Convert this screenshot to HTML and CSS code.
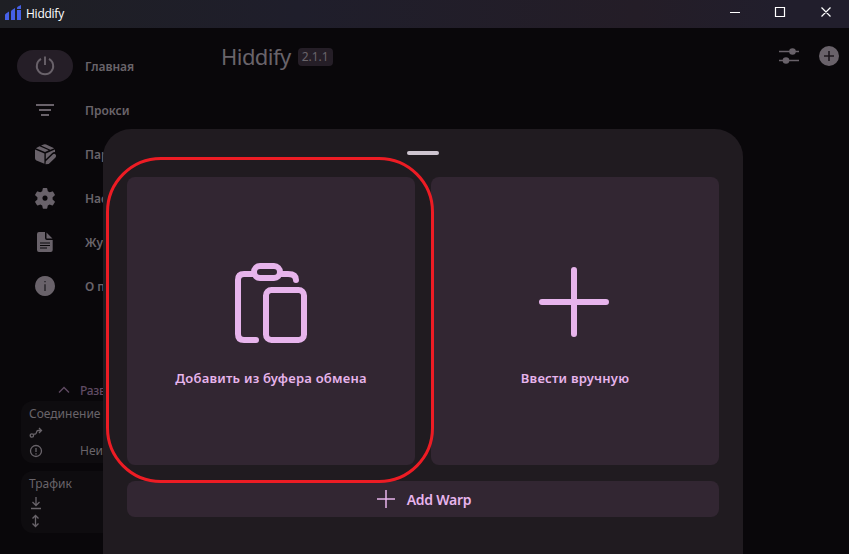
FILE: index.html
```html
<!DOCTYPE html>
<html lang="ru">
<head>
<meta charset="utf-8">
<title>Hiddify</title>
<link rel="stylesheet" href="styles.css">
</head>
<body>
<div class="window">
  <header class="titlebar">
    <svg class="logo" width="17" height="16" viewBox="0 0 17 16"><path d="M0 10q0-1 1-1.500L4 6.500V15H0zM6 6.500q0-1 1-1.500l3-2v12H6zM12 3q0-1 1-1.500L16 0v4h-4zM12 5h4v10h-4z"/></svg>
    <span class="app-name">Hiddify</span>
    <svg class="controls" width="102" height="12" viewBox="0 0 102 12"><path d="M0 6.500h10M45.500 1.500h9v9h-9zM91.500 1.500l9 9M100.500 1.500l-9 9"/></svg>
  </header>
  <div class="shell">
    <aside class="sidebar">
      <nav class="nav">
        <a class="item"><span class="pill active"><svg viewBox="0 0 24 24" width="24" height="24" class="line"><path d="M12 2.500v8.500M8 4.900a8.200 8.200 0 1 0 8 0"/></svg></span><span>Главная</span></a>
        <a class="item"><span class="pill"><svg viewBox="0 0 24 24" width="24" height="24" class="line"><path d="M3 7h18M6 12h12M8 17h8"/></svg></span><span>Прокси</span></a>
        <a class="item"><span class="pill"><svg viewBox="0 0 24 24" width="24" height="24"><path d="M2 7.600l9.400 3.800v10.300L3.400 18.500Q2 17.800 2 16.300zM2.800 6.200l3.700-1.900 9.200 3.900-3.700 1.900zM8 3.500l2.700-1.100q1.200-.4 2.400 0l8.100 3.800-3.800 1.600zM12.800 11.400L22 7.600v2.500q-2 0-3.300 1.300l-5.900 5.800zM12.800 19.300l6.900-6.800q1.500-1.300 2.900 0 1.200 1.500-.1 2.900l-6.800 6.500-3.200.4z"/></svg></span><span>Параметры</span></a>
        <a class="item"><span class="pill"><svg viewBox="0 0 24 24" width="24" height="24"><path fill-rule="evenodd" d="M10.400 2h3.200q.6 0 .7.700l.5 2.500 1.900 1.100 2.500-.9q.6-.2.900.3l1.700 2.900q.3.600-.2 1l-2 1.700v2.200l2 1.700q.5.400.2 1l-1.700 2.900q-.3.500-.9.300l-2.500-.9-1.900 1.100-.5 2.500q-.1.700-.7.700h-3.200q-.6 0-.7-.7l-.5-2.500-1.900-1.100-2.500.9q-.6.200-.9-.3l-1.700-2.900q-.3-.6.200-1l2-1.700v-2.200l-2-1.700q-.5-.4-.2-1l1.700-2.900q.3-.5.900-.3l2.500.9 1.900-1.100.5-2.500q.1-.7.700-.7zM12 9.500a2.600 2.600 0 1 0 .01 0z"/></svg></span><span>Настройки</span></a>
        <a class="item"><span class="pill"><svg viewBox="0 0 24 24" width="24" height="24"><path fill-rule="evenodd" d="M6 2h6v6q0 2 2 2h5.700v10q0 2-2 2H6q-2 0-2-2V4q0-2 2-2zM7 12.500v1h10v-1zM7 15v1h10v-1zM7 17.500v1h7v-1zM13.500 2.500l6 6H14q-.5 0-.5-.5z"/></svg></span><span>Журнал</span></a>
        <a class="item"><span class="pill"><svg viewBox="0 0 24 24" width="24" height="24"><path fill-rule="evenodd" d="M12 2a10 10 0 1 0 .01 0zM11.500 7h1v1.300h-1zM11.500 10.300h1V17h-1z"/></svg></span><span>О программе</span></a>
      </nav>
      <div class="expand"><svg width="12" height="8" viewBox="0 0 12 8"><path d="M1 6.500l5-5 5 5"/></svg><span>Развернуть</span></div>
      <section class="stat">
        <h2>Соединение</h2>
        <div class="stat-row"><svg width="14" height="14" viewBox="0 0 14 14"><path d="M4.400 8.500C5.500 7.300 6 9 7 7.500S7.300 4.500 9 4.500h3M10 2l2.500 2.500L10 7"/><circle cx="2.900" cy="9.500" r="1.700"/></svg></div>
        <div class="stat-row"><svg width="14" height="14" viewBox="0 0 14 14"><circle cx="7" cy="7" r="5.500"/><path d="M7 4v4M7 9.300v1.200"/></svg><span>Неизвестно</span></div>
      </section>
      <section class="stat">
        <h2>Трафик</h2>
        <div class="stat-row"><svg width="14" height="14" viewBox="0 0 14 14"><path d="M7 1v8.500M3.500 6L7 9.500 10.500 6M2 12.500h10"/></svg></div>
        <div class="stat-row"><svg width="14" height="14" viewBox="0 0 14 14"><path d="M6.500 2v10M3.500 4.500l3-3 3 3M3.500 9.500l3 3 3-3"/></svg></div>
      </section>
    </aside>
    <main class="main">
      <h1>Hiddify</h1><span class="version">2.1.1</span>
      <svg class="tune" width="20" height="16" viewBox="0 0 20 16"><path d="M0 3.500h20M0 12.500h20"/><circle cx="13.500" cy="3.500" r="3.300"/><circle cx="7" cy="12.500" r="3.300"/></svg>
      <svg class="add" width="20" height="20" viewBox="0 0 20 20"><circle cx="10" cy="10" r="10"/><path d="M10 5v10M5 10h10"/></svg>
    </main>
  </div>
  <div class="sheet">
    <div class="handle"></div>
    <div class="cards">
      <button class="card"><svg width="80" height="80" viewBox="0 0 80 80"><rect x="23" y="3" width="26" height="12" rx="6"/><path d="M22 11h-9q-6 0-6 6v54q0 6 6 6h12M50 11h7q8 0 8 6"/><rect x="35" y="27" width="38" height="50" rx="5.500"/></svg><span class="paste-label">Добавить из буфера обмена</span></button>
      <button class="card"><svg width="80" height="80" viewBox="0 0 80 80"><path d="M39 7v64M7 39h64"/></svg><span class="manual-label">Ввести вручную</span></button>
    </div>
    <button class="warp"><svg width="18" height="18" viewBox="0 0 18 18"><path d="M9 0v18M0 9h18"/></svg><span>Add Warp</span></button>
  </div>
  <div class="highlight"></div>
</div>
</body>
</html>
```
FILE: styles.css
```css
* { box-sizing: border-box; }
body { margin: 0; background: #09070a; font-family: "Noto Sans", "Open Sans", sans-serif; }
.window { position: relative; width: 849px; height: 554px; overflow: hidden; color: #69646a; }
.titlebar { display: flex; align-items: center; height: 28px; padding: 0 17px 4px 5px; background: linear-gradient(90deg, #1e1f24, #1f1e2b 35%, #241d27 75%, #211e2c 92%); color: #fff; }
.logo { fill: #4560e6; margin-top: 1px; }
.app-name { margin: 2px 0 0 4px; font-family: "Open Sans", sans-serif; font-size: 12px; letter-spacing: -.25px; }
.controls { margin-left: auto; fill: none; stroke: #fff; stroke-width: 1.2; }
.shell { display: flex; height: 526px; }
.sidebar { width: 205px; padding: 16px 0 0 17px; }
.nav { height: 336px; }
.item { display: flex; align-items: center; gap: 12px; height: 44px; font-size: 12px; font-weight: 600; white-space: nowrap; }
.pill { display: flex; align-items: center; justify-content: center; width: 56px; height: 32px; border-radius: 16px; }
.active { background: #251e27; }
.pill svg { fill: #69626a; }
.pill .line { fill: none; stroke: #69626a; stroke-width: 1.9; }
.expand { display: flex; align-items: center; gap: 10px; height: 20px; padding-left: 41px; color: #604b64; font-size: 12px; font-weight: 500; letter-spacing: -.25px; }
.expand svg, .stat svg { fill: none; stroke: currentColor; stroke-width: 1.3; }
.stat { width: 176px; height: 62px; margin: 1px 0 8px 4px; padding: 4px 8px; border-radius: 12px; background: #0e0c0f; }
.stat + .stat { margin-top: 0; }
.stat h2 { height: 18px; margin: 0; font-size: 12px; line-height: 17px; font-weight: 400; }
.stat-row { display: flex; align-items: center; gap: 37px; height: 18px; padding-top: 1px; font-size: 12px; }
.main { display: flex; flex: 1; height: 56px; align-items: center; padding: 0 10px 0 16px; }
h1 { margin: 0; font-size: 22px; line-height: 30px; font-weight: 400; letter-spacing: -.55px; }
.version { width: 35px; height: 18px; margin: 2px 0 0 7px; border-radius: 4px; background: #251e27; text-align: center; font-size: 12px; line-height: 18px; }
.tune { margin: 0 20px 0 auto; fill: #69626a; stroke: #69626a; stroke-width: 1.5; }
.tune circle { stroke: none; }
.add { fill: #69626a; stroke: #1c171d; stroke-width: 1.6; }
.add circle { stroke: none; }
.sheet { position: absolute; left: 103px; top: 129px; width: 640px; height: 425px; padding: 22px 24px; border-radius: 28px 28px 0 0; background: #201b20; }
.handle { width: 32px; height: 4px; margin: 0 auto 22px; border-radius: 2px; background: #cdc4cf; }
.cards { display: grid; grid-template-columns: 1fr 1fr; gap: 16px; }
button { border: 0; border-radius: 8px; background: #322632; color: #e7b4ec; font-family: inherit; font-weight: 600; }
.card { display: flex; flex-direction: column; align-items: center; height: 288px; padding: 86px 0 0; font-size: 13px; line-height: 18px; letter-spacing: .23px; }
.card svg { fill: none; stroke: #e7b4ec; stroke-width: 6; stroke-linecap: round; margin-bottom: 26px; }
.warp { display: flex; align-items: center; justify-content: center; gap: 12px; width: 592px; height: 36px; margin-top: 16px; padding: 0; font-size: 14px; letter-spacing: -.25px; }
.warp { padding-left: 2px; }
.warp svg { fill: none; stroke: #e7b4ec; stroke-width: 1.5; }
.highlight { position: absolute; left: 106px; top: 157px; width: 328px; height: 326px; border: 3px solid #ed1c24; border-radius: 55px; }
```
